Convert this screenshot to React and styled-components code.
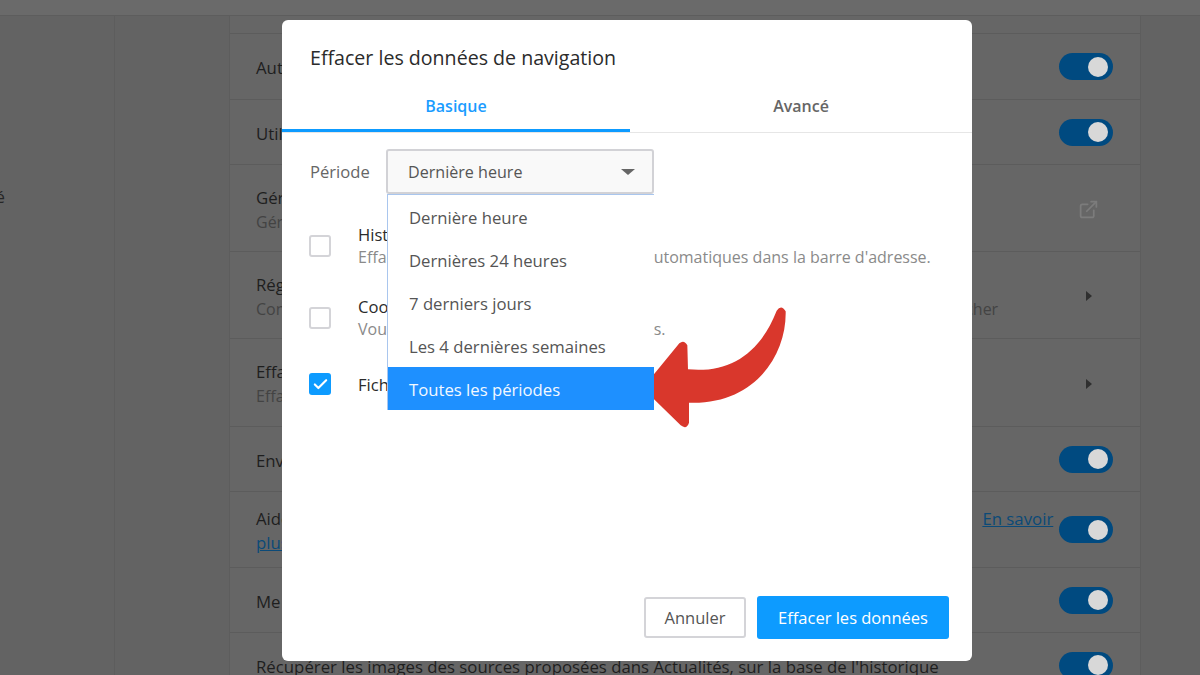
import React from 'react'
import styled, { createGlobalStyle } from 'styled-components'
import { Check, ExternalLink } from 'lucide-react'

const Global = createGlobalStyle`
  html, body { margin: 0; padding: 0; }
  body { font-family: "Open Sans", "Noto Sans", sans-serif; overflow: hidden; }
  * { box-sizing: border-box; }
`

// the settings page behind the dialog is painted in its dimmed colours
const Page = styled.div`
  position: relative;
  width: 1200px;
  height: 675px;
  overflow: hidden;
  background: #636363;
  display: flex;
  flex-direction: column;
`
const TopBar = styled.div`
  height: 16px;
  flex: none;
  background: #6a6a6a;
  border-bottom: 1px solid #5d5d5d;
`
const Columns = styled.div`
  flex: 1;
  display: grid;
  grid-template-columns: 115px 114px 912px 1fr;
  min-height: 0;
`
const Sidebar = styled.div`
  border-right: 1px solid #5d5d5d;
  padding-top: 169px;
  display: flex;
  align-items: flex-start;
`
const SideCrop = styled.div`
  width: 5px;
  overflow: hidden;
  display: flex;
  justify-content: flex-end;
  font-size: 16.8px;
  line-height: 24px;
  color: #262626;
  white-space: nowrap;
`
const Spacer = styled.div``
const List = styled.div`
  background: #666666;
  border-left: 1px solid #5d5d5d;
  border-right: 1px solid #5d5d5d;
  display: flex;
  flex-direction: column;
`
const Row = styled.div`
  flex: none;
  height: ${p => p.$h}px;
  border-bottom: 1px solid #5c5c5c;
  padding: 0 27px 0 26px;
  display: flex;
  align-items: center;
  justify-content: space-between;
  gap: 3px;
`
const RowText = styled.div`
  flex: 1;
  min-width: 0;
  padding-top: 3px;
  font-size: 16.8px;
  line-height: 24px;
  color: #1e1e1e;
`
const RowSub = styled.div`
  font-size: 16px;
  color: #434343;
`
const MoreLink = styled.a`
  margin-left: 20px;
  color: #0b4a78;
  text-decoration: underline;
`
const Toggle = styled.span`
  flex: none;
  width: 54px;
  height: 27px;
  border-radius: 14px;
  background: #004a80;
  display: flex;
  align-items: center;
  justify-content: flex-end;
  padding-right: 5px;
  &::after {
    content: '';
    width: 20px;
    height: 20px;
    border-radius: 50%;
    background: #d8d8d8;
  }
`
const RowIcon = styled.span`
  flex: none;
  width: 54px;
  padding: 2px 0 0 5px;
  display: flex;
  justify-content: center;
  color: #7c7c7c;
`
const Chevron = styled.span`
  width: 0;
  height: 0;
  border-left: 6px solid #2f2f2f;
  border-top: 5.5px solid transparent;
  border-bottom: 5.5px solid transparent;
`

const DialogLayer = styled.div`
  position: absolute;
  inset: 0;
  display: flex;
  justify-content: center;
  align-items: flex-start;
  padding: 20px 0 0 54px;
`
const Dialog = styled.div`
  width: 690px;
  height: 641px;
  background: #fff;
  border-radius: 6px;
  display: flex;
  flex-direction: column;
`
const Title = styled.h2`
  margin: 0;
  padding: 24px 28px 0;
  font-size: 19.6px;
  line-height: 28px;
  font-weight: 500;
  color: #2b2b2b;
`
const Tabs = styled.div`
  margin-top: 8px;
  height: 53px;
  flex: none;
  display: grid;
  grid-template-columns: 348px 1fr;
  border-bottom: 1px solid #e6e6e6;
`
const Tab = styled.div`
  height: 52px;
  padding-top: ${p => (p.$active ? 2 : 0)}px;
  display: flex;
  align-items: center;
  justify-content: center;
  font-size: 16px;
  font-weight: 600;
  color: ${p => (p.$active ? '#1a9cff' : '#666')};
  border-bottom: ${p => (p.$active ? '3px solid #0d9bff' : 'none')};
`
const PeriodRow = styled.div`
  margin-top: 16px;
  padding-left: 28px;
  display: flex;
  align-items: center;
  flex: none;
`
const PeriodLabel = styled.span`
  width: 76px;
  font-size: 16.6px;
  color: #666;
`
const SelectBox = styled.div`
  position: relative;
  width: 268px;
  height: 45px;
  border: 2px solid #d2d2d6;
  border-radius: 3px;
  background: #f9f9f9;
  padding: 0 17px 0 20px;
  display: flex;
  align-items: center;
  justify-content: space-between;
  font-size: 16.1px;
  color: #555;
`
const Caret = styled.span`
  width: 0;
  height: 0;
  border-top: 6px solid #666;
  border-left: 7px solid transparent;
  border-right: 7px solid transparent;
`
const Menu = styled.div`
  position: absolute;
  top: 100%;
  left: -1px;
  right: -2px;
  margin-top: 2px;
  background: #fff;
  border: 1px solid #a9c6ee;
  border-right: none;
  border-bottom: none;
  z-index: 2;
  display: flex;
  flex-direction: column;
`
const MenuItem = styled.div`
  height: 43px;
  padding: 2px 0 0 21px;
  display: flex;
  align-items: center;
  font-size: 16.7px;
  color: ${p => (p.$selected ? '#f2f8ff' : '#555')};
  background: ${p => (p.$selected ? '#1e90ff' : 'transparent')};
`
const Options = styled.div`
  margin-top: 16px;
  padding-left: 27px;
  display: flex;
  flex-direction: column;
`
const Option = styled.div`
  min-height: 60px;
  padding: 13px 0;
  display: flex;
  align-items: center;
  gap: 27px;
`
const Box = styled.span`
  flex: none;
  width: 22px;
  height: 22px;
  border-radius: 3px;
  display: flex;
  align-items: center;
  justify-content: center;
  color: #fff;
  background: ${p => (p.$on ? '#0d9bff' : '#fff')};
  border: ${p => (p.$on ? 'none' : '2px solid #d4d4d8')};
`
const OptionText = styled.div`
  line-height: 23px;
  white-space: nowrap;
`
const OptionTitle = styled.div`
  font-size: 16.6px;
  color: #2b2b2b;
  font-weight: 500;
`
const OptionSub = styled.div`
  font-size: 16px;
  color: #8a8a8a;
`
const Footer = styled.div`
  margin-top: auto;
  padding: 0 23px 22px 0;
  display: flex;
  justify-content: flex-end;
  align-items: center;
  gap: 11px;
`
const Button = styled.button`
  font: inherit;
  font-size: 16.5px;
  border-radius: 3px;
  height: ${p => (p.$primary ? 43 : 41)}px;
  width: ${p => (p.$primary ? 192 : 102)}px;
  color: ${p => (p.$primary ? '#fff' : '#555')};
  background: ${p => (p.$primary ? '#0d9bff' : '#fff')};
  border: ${p => (p.$primary ? 'none' : '2px solid #d4d4d8')};
  padding: 0;
`
const Arrow = styled.svg`
  position: absolute;
  left: 640px;
  top: 290px;
  width: 160px;
  height: 150px;
`

const periods = ['Dernière heure', 'Dernières 24 heures', '7 derniers jours', 'Les 4 dernières semaines', 'Toutes les périodes']

const App = () => (
  <>
    <Global />
    <Page>
      <TopBar />
      <Columns>
        <Sidebar>
          <SideCrop>Sécurité et confidentialité</SideCrop>
        </Sidebar>
        <Spacer />
        <List>
          <Row $h={18} />
          <Row $h={66}>
            <RowText>Autoriser les sites à vérifier si vous avez enregistré des moyens de paiement</RowText>
            <Toggle />
          </Row>
          <Row $h={65}>
            <RowText>Utiliser un service de prédiction pour compléter les recherches</RowText>
            <Toggle />
          </Row>
          <Row $h={87}>
            <RowText>
              Gérer les certificats
              <RowSub>Gérer les paramètres et les certificats HTTPS/SSL</RowSub>
            </RowText>
            <RowIcon><ExternalLink size={21} strokeWidth={2} /></RowIcon>
          </Row>
          <Row $h={87}>
            <RowText>
              Régler les paramètres de contenu
              <RowSub>Contrôler les informations que les sites web peuvent utiliser ainsi que le contenu qu'ils vont afficher</RowSub>
            </RowText>
            <RowIcon><Chevron /></RowIcon>
          </Row>
          <Row $h={88}>
            <RowText>
              Effacer les données de navigation
              <RowSub>Effacer l'historique, les cookies, le cache et autres</RowSub>
            </RowText>
            <RowIcon><Chevron /></RowIcon>
          </Row>
          <Row $h={65}>
            <RowText>Envoyer une demande « Ne pas me pister » avec votre trafic de navigation</RowText>
            <Toggle />
          </Row>
          <Row $h={76}>
            <RowText>
              Aider à améliorer Opera en envoyant des informations sur l'utilisation des fonctionnalités. <MoreLink>En savoir plus</MoreLink>
            </RowText>
            <Toggle />
          </Row>
          <Row $h={65}>
            <RowText>Me protéger contre les sites malveillants</RowText>
            <Toggle />
          </Row>
          <Row $h={65}>
            <RowText>Récupérer les images des sources proposées dans Actualités, sur la base de l'historique</RowText>
            <Toggle />
          </Row>
        </List>
        <Spacer />
      </Columns>
      <DialogLayer>
        <Dialog>
          <Title>Effacer les données de navigation</Title>
          <Tabs>
            <Tab $active>Basique</Tab>
            <Tab>Avancé</Tab>
          </Tabs>
          <PeriodRow>
            <PeriodLabel>Période</PeriodLabel>
            <SelectBox>
              Dernière heure
              <Caret />
              <Menu>
                {periods.map((p, i) => (
                  <MenuItem key={p} $selected={i === periods.length - 1}>{p}</MenuItem>
                ))}
              </Menu>
            </SelectBox>
          </PeriodRow>
          <Options>
            <Option>
              <Box />
              <OptionText>
                <OptionTitle>Historique de navigation</OptionTitle>
                <OptionSub>Effacer l'historique, dont vos requêtes automatiques dans la barre d'adresse.</OptionSub>
              </OptionText>
            </Option>
            <Option>
              <Box />
              <OptionText>
                <OptionTitle>Cookies et autres données de sites</OptionTitle>
                <OptionSub>Vous déconnecte de la majorité des sites.</OptionSub>
              </OptionText>
            </Option>
            <Option>
              <Box $on><Check size={17} strokeWidth={3} /></Box>
              <OptionText>
                <OptionTitle>Fichiers et images en cache</OptionTitle>
              </OptionText>
            </Option>
          </Options>
          <Footer>
            <Button>Annuler</Button>
            <Button $primary>Effacer les données</Button>
          </Footer>
        </Dialog>
        <Arrow viewBox="0 0 480 450">
          <path
            fill="#d9372c"
            d="M16 284 L118 160 Q132 148 142 166 L144 238 C270 250 360 190 410 62 Q424 42 437 64 C440 200 340 345 147 338 L147 398 Q140 420 122 406 L16 302 Q8 293 16 284 Z"
          />
        </Arrow>
      </DialogLayer>
    </Page>
  </>
)

export default App
